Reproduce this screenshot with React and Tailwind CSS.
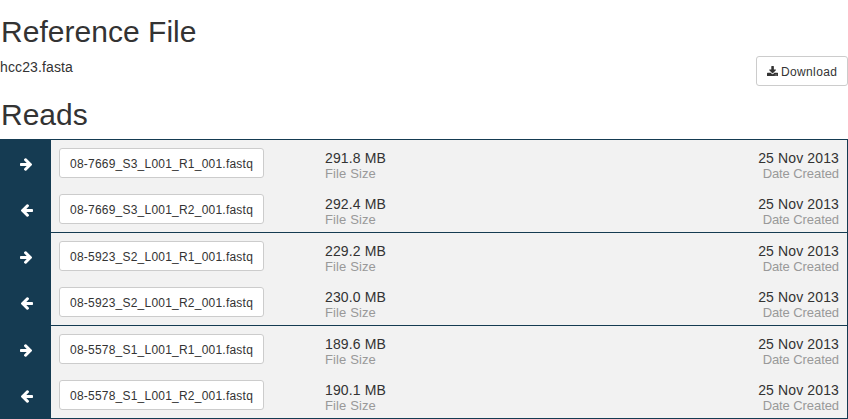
const groups = [
  [
    { name: "08-7669_S3_L001_R1_001.fastq", size: "291.8 MB" },
    { name: "08-7669_S3_L001_R2_001.fastq", size: "292.4 MB" },
  ],
  [
    { name: "08-5923_S2_L001_R1_001.fastq", size: "229.2 MB" },
    { name: "08-5923_S2_L001_R2_001.fastq", size: "230.0 MB" },
  ],
  [
    { name: "08-5578_S1_L001_R1_001.fastq", size: "189.6 MB" },
    { name: "08-5578_S1_L001_R2_001.fastq", size: "190.1 MB" },
  ],
];

const created = "25 Nov 2013";

function Arrow({ back }) {
  return (
    <svg
      viewBox="0 0 1472 1558"
      className={back ? "ml-[2px] h-[13px] w-[12px] -scale-x-100" : "ml-px h-[13px] w-[12px]"}
      fill="currentColor"
    >
      <path d="M1472 779q0 54-37 91l-651 651q-39 37-91 37-51 0-90-37l-75-75q-38-38-38-91t38-91l293-293H117q-52 0-84.5-37.5T0 843V715q0-53 32.5-90.5T117 587h704L528 293q-38-36-38-90t38-90l75-75q38-38 90-38 53 0 91 38l651 651q37 35 37 90z" />
    </svg>
  );
}

function DownloadIcon() {
  return (
    <svg viewBox="0 0 1664 1536" className="mb-px h-[10.3px] w-[11.14px] shrink-0" fill="currentColor">
      <path d="M1280 1344q0-26-19-45t-45-19-45 19-19 45 19 45 45 19 45-19 19-45zm256 0q0-26-19-45t-45-19-45 19-19 45 19 45 45 19 45-19 19-45zm128-224v320q0 40-28 68t-68 28H96q-40 0-68-28t-28-68v-320q0-40 28-68t68-28h465l135 136q58 56 136 56t136-56l136-136h464q40 0 68 28t28 68zm-325-569q17 41-14 70l-448 448q-18 19-45 19t-45-19L342 621q-31-29-14-70 17-39 59-39h256V64q0-26 19-45t45-19h256q26 0 45 19t19 45v448h256q42 0 59 39z" />
    </svg>
  );
}

function Button({ children }) {
  return (
    <button className="flex h-[30px] items-center whitespace-nowrap rounded-[3px] border border-[#ccc] bg-white px-[10px] pt-px text-[12px] leading-[18px] text-[#333]">
      {children}
    </button>
  );
}

function Row({ file, back }) {
  return (
    <div className="flex h-[46px]">
      <div className="flex w-[51px] shrink-0 justify-center bg-[#153b52] pt-[18px] text-white">
        <Arrow back={back} />
      </div>
      <div className="flex grow items-start pl-2 pr-2 pt-2">
        <div className="w-[266px] shrink-0">
          <Button>
            <span className="w-[183px] text-left tracking-[0.222px]">{file.name}</span>
          </Button>
        </div>
        <div className="grow pt-[2px]">
          <div className="text-[14px] leading-[16px] tracking-[0.14px]">{file.size}</div>
          <div className="text-[13px] leading-[15px] tracking-[0.12px] text-[#999]">File Size</div>
        </div>
        <div className="pt-[2px] text-right">
          <div className="text-[14px] leading-[16px] tracking-[0.13px]">{created}</div>
          <div className="text-[13px] leading-[15px] tracking-[-0.08px] text-[#999]">Date Created</div>
        </div>
      </div>
    </div>
  );
}

export default function App() {
  return (
    <main className="h-[419px] w-[848px] overflow-hidden bg-white font-['Liberation_Sans',Arial,sans-serif] text-[14px] text-[#333]">
      <h1 className="pl-px pt-[15px] text-[30px] leading-[33px] tracking-[0.03px]">Reference File</h1>
      <div className="flex items-start justify-between pt-2">
        <p className="pt-px leading-[20px] tracking-[0.12px]">hcc23.fasta</p>
        <Button>
          <DownloadIcon />
          <span className="ml-[3px] w-[56px] text-left tracking-[0.36px]">Download</span>
        </Button>
      </div>
      <h1 className="mt-3 pl-px text-[30px] leading-[33px]">Reads</h1>
      <section className="mt-2 border-r border-t border-[#153b52] bg-[#f2f2f2]">
        {groups.map((files) => (
          <div key={files[0].name} className="border-b border-[#153b52]">
            <Row file={files[0]} />
            <Row file={files[1]} back />
          </div>
        ))}
      </section>
    </main>
  );
}
